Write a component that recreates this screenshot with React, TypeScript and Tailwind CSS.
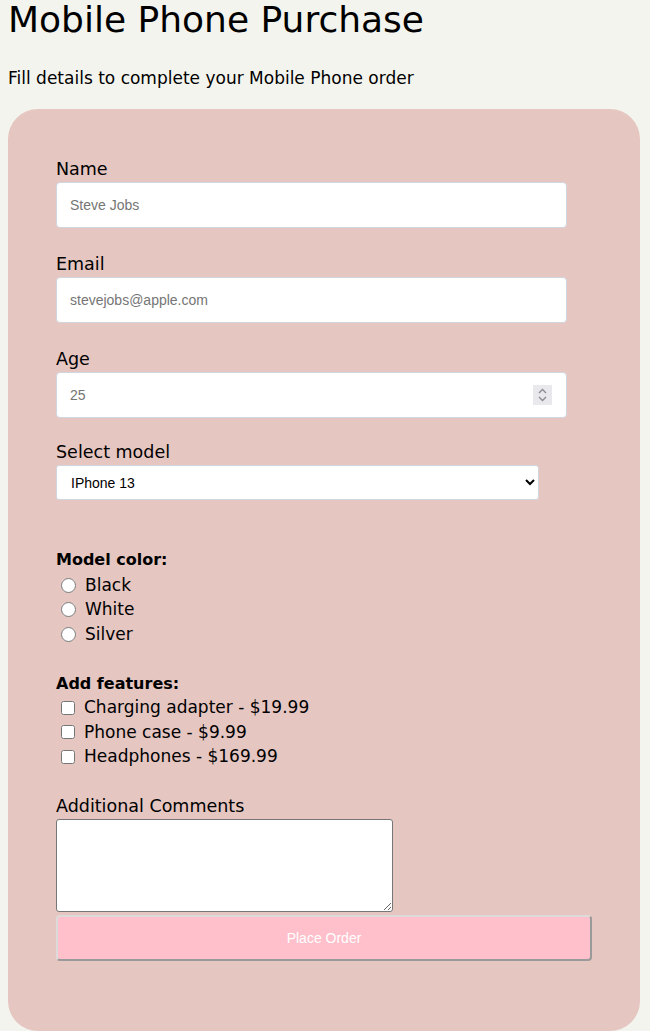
import { useState } from "react";

const colors = ["Black", "White", "Silver"];
const features = [
    "Charging adapter - $19.99",
    "Phone case - $9.99",
    "Headphones - $169.99",
];

const inputCls =
    "block w-[511px] h-[46px] rounded-[4px] border border-[#cfd6e0] bg-white px-[13px] text-[14px] text-black font-['Liberation_Sans',sans-serif] placeholder:text-[#757575] outline-none";

export default function App() {
    const [model, setModel] = useState("iphone13");

    return (
        <div className="min-h-screen bg-[#f4f4ee] px-2 font-['DejaVu_Sans',sans-serif] text-black">
            <h1 className="text-[36px] leading-[40px] font-normal">Mobile Phone Purchase</h1>
            <p className="mt-[26px] text-[17px] leading-[24px]">Fill details to complete your Mobile Phone order</p>

            <form className="mt-[19px] h-[922px] w-[632px] rounded-[30px] bg-[#e5c6c1] pl-12 pt-[47px]">
                <label className="block text-[17.5px] leading-[26px]">Name</label>
                <input type="text" placeholder="Steve Jobs" className={inputCls} />

                <label className="mt-[23px] block text-[17.5px] leading-[26px]">Email</label>
                <input type="email" placeholder="stevejobs@apple.com" className={inputCls} />

                <label className="mt-[23px] block text-[17.5px] leading-[26px]">Age</label>
                <div className="flex w-[511px] h-[46px] items-center rounded-[4px] border border-[#cfd6e0] bg-white pl-[13px] pr-[14px]">
                    <input
                        type="text"
                        placeholder="25"
                        className="flex-1 bg-transparent text-[14px] font-['Liberation_Sans',sans-serif] placeholder:text-[#757575] outline-none"
                    />
                    <div className="flex h-[20px] w-[19px] flex-col items-center justify-center bg-[#e9e9ed]">
                        <svg width="9" height="14" viewBox="0 0 9 14" fill="none" stroke="#8a8a8f" strokeWidth="1.3">
                            <path d="M1 5 L4.5 1.5 L8 5" />
                            <path d="M1 9 L4.5 12.5 L8 9" />
                        </svg>
                    </div>
                </div>

                <label className="mt-[21px] block text-[17.5px] leading-[26px]">Select model</label>
                <select
                    value={model}
                    onChange={e => setModel(e.target.value)}
                    className="block w-[483px] h-[35px] rounded-[3px] border border-[#cfd6e0] bg-white pl-[10px] pr-2 text-[14px] font-['Liberation_Sans',sans-serif] text-black"
                >
                    <option value="iphone13">IPhone 13</option>
                    <option value="iphone13pro">IPhone 13 Pro</option>
                    <option value="iphone12">IPhone 12</option>
                </select>

                <div className="mt-[47px] text-[16px] leading-[26px] font-bold">Model color:</div>
                {colors.map(c => (
                    <label key={c} className="flex h-[24.5px] items-center text-[17px]">
                        <input type="radio" name="color" className="ml-[5px] mr-[9px] h-[15px] w-[15px]" />
                        {c}
                    </label>
                ))}

                <div className="mt-[25px] text-[16px] leading-[24px] font-bold">Add features:</div>
                {features.map(f => (
                    <label key={f} className="flex h-[24.5px] items-center text-[17px]">
                        <input type="checkbox" className="ml-[5px] mr-[9px] h-[14px] w-[14px]" />
                        {f}
                    </label>
                ))}

                <label className="mt-[24px] block text-[17.5px] leading-[26px]">Additional Comments</label>
                <textarea className="block w-[337px] h-[93px] resize rounded-[3px] border border-[#767676] bg-white" />

                <button
                    type="button"
                    className="mt-[3px] block w-[536px] h-[46px] rounded-[4px] border-2 border-t-[#dedada] border-l-[#dedada] border-b-[#9a9a9a] border-r-[#9a9a9a] bg-[#ffc0cb] text-[14px] text-white font-['Liberation_Sans',sans-serif]"
                >
                    Place Order
                </button>
            </form>
        </div>
    );
}
